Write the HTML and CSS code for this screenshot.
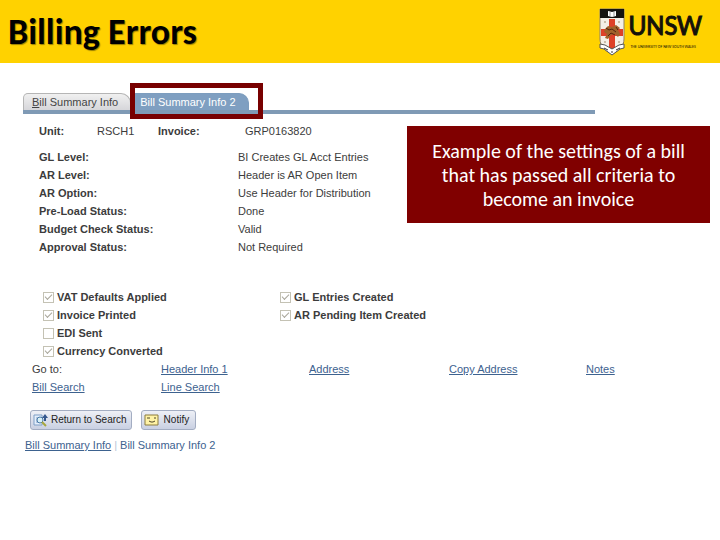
FILE: index.html
```
<!DOCTYPE html>
<html lang="en">
<head>
  <meta charset="UTF-8" />
  <meta name="viewport" content="width=device-width, initial-scale=1" />
  <title>Billing Errors</title>
  <link rel="stylesheet" href="styles.css">
</head>
<body>
  <header class="banner">
    <h1>Billing Errors</h1>
    <div class="logo" role="img" aria-label="UNSW - The University of New South Wales">
      <svg class="crest" width="26" height="48" viewBox="0 0 26 48" aria-hidden="true">
        <path d="M1 1h24v30c0 7-5 12-12 15C6 43 1 38 1 31z" fill="#f4efe6" stroke="#8d8068"/>
        <path d="M1 1h24v9H1z" fill="#15130f"/>
        <path d="M9 3l4 1 4-1v5l-4 1-4-1z" fill="#fff"/>
        <path d="M10 5h2M14 5h2M10 7h2M14 7h2" stroke="#999" stroke-width="1"/>
        <path d="M10 11h6v10h8v7h-8v13h-6V28H2v-7h8z" fill="#dd4128"/>
        <path d="M6 21l3-3 4 1 4-2 4 3-2 2 2 4-2 3-3-3-4 1-3 4-3-1 2-4-3-2z" fill="#a0622a"/>
        <path d="M7 20l3 2 3-1 4 3M9 28l3-3 4 2M17 19l2 3" fill="none" stroke="#54210f" stroke-width="1"/>
        <path d="M5 13l2 2M7 13l-2 2M19 13l2 2M21 13l-2 2M5 33l2 2M7 33l-2 2M19 33l2 2M21 33l-2 2" stroke="#c9bda8"/>
        <path d="M1 36l5 1 7 4 7-4 5-1v4l-4 1-8 6-8-6-4-1z" fill="#fff" stroke="#555"/>
        <path d="M5 40l4 2M12 44h2M17 42l4-2" stroke="#333"/>
      </svg>
      <div class="logo-text">
        <span class="logo-name">UNSW</span>
        <span class="logo-sub">THE UNIVERSITY OF NEW SOUTH WALES</span>
      </div>
    </div>
  </header>

  <main class="content">
    <nav class="tabs" aria-label="Bill pages">
      <a href="#info" class="tab"><u>B</u>ill Summary Info</a>
      <a href="#info2" class="tab active" aria-current="page">Bill Summary Info 2</a>
      <span class="highlight"></span>
    </nav>

    <aside class="callout">Example of the settings of a bill that has passed all criteria to become an invoice</aside>

    <dl class="bill-key">
      <dt>Unit:</dt><dd>RSCH1</dd>
      <dt>Invoice:</dt><dd>GRP0163820</dd>
    </dl>

    <dl class="status">
      <dt>GL Level:</dt><dd>BI Creates GL Acct Entries</dd>
      <dt>AR Level:</dt><dd>Header is AR Open Item</dd>
      <dt>AR Option:</dt><dd>Use Header for Distribution</dd>
      <dt>Pre-Load Status:</dt><dd>Done</dd>
      <dt>Budget Check Status:</dt><dd>Valid</dd>
      <dt>Approval Status:</dt><dd>Not Required</dd>
    </dl>

    <div class="checks">
      <div>
        <label><input type="checkbox" checked disabled>VAT Defaults Applied</label>
        <label><input type="checkbox" checked disabled>Invoice Printed</label>
        <label><input type="checkbox" disabled>EDI Sent</label>
        <label><input type="checkbox" checked disabled>Currency Converted</label>
      </div>
      <div>
        <label><input type="checkbox" checked disabled>GL Entries Created</label>
        <label><input type="checkbox" checked disabled>AR Pending Item Created</label>
      </div>
    </div>

    <nav class="goto" aria-label="Go to">
      <span>Go to:</span>
      <a href="#header">Header Info 1</a>
      <a href="#address">Address</a>
      <a href="#copy">Copy Address</a>
      <a href="#notes">Notes</a>
      <a href="#bills">Bill Search</a>
      <a href="#lines">Line Search</a>
    </nav>

    <div class="actions">
      <button type="button">
        <svg width="16" height="14" viewBox="0 0 16 14" aria-hidden="true">
          <path d="M1 2h8v10H1z" fill="#e4eefb" stroke="#7f9fc6"/>
          <path d="M3 5h3M3 7h2M3 9h2" stroke="#7f9fc6"/>
          <circle cx="7" cy="7" r="3" fill="#d9f0f5" stroke="#4a79a8"/>
          <path d="M9 9l4 4" stroke="#a7a63c" stroke-width="2"/>
          <path d="M9 5l3-4 3 4h-2v3h-2V5z" fill="#33578d"/>
        </svg>
        Return to Search
      </button>
      <button type="button" class="notify">
        <svg width="16" height="14" viewBox="0 0 16 14" aria-hidden="true">
          <path d="M1 2h13v10H1z" fill="#fff3a6" stroke="#8c7d3c"/>
          <path d="M3 5h3M10 5h2M5 8l2 1h2l2-1" fill="none" stroke="#4d4526"/>
        </svg>
        Notify
      </button>
    </div>

    <nav class="footer-links" aria-label="Page links">
      <a href="#info">Bill Summary Info</a><span class="sep">|</span><span>Bill Summary Info 2</span>
    </nav>
  </main>
</body>
</html>
```
FILE: styles.css
```
/* Base */
* {
  box-sizing: border-box;
  margin: 0;
  padding: 0;
}
body {
  background: #fff;
  color: #3c3c3c;
  font-family: "Liberation Sans", Arial, sans-serif;
  font-size: 11px;
  line-height: 18px;
}
a {
  color: #3d628f;
}

/* Yellow banner */
.banner {
  display: flex;
  justify-content: space-between;
  align-items: center;
  height: 63px;
  padding: 0 18px 0 8px;
  background: #ffd200;
}
h1 {
  font-family: Carlito, Calibri, Lato, sans-serif;
  font-size: 36px;
  line-height: 40px;
  color: #000;
  text-shadow: 1px 1px 1px rgba(0, 0, 0, 0.4);
}
.logo {
  display: flex;
  gap: 3px;
  color: #14110a;
}
.logo-text {
  display: flex;
  flex-direction: column;
}
.logo-name {
  font-family: Carlito, Calibri, Lato, sans-serif;
  font-size: 28px;
  line-height: 36px;
  -webkit-text-stroke: 1px #14110a;
}
.logo-sub {
  padding-left: 2px;
  font-family: Carlito, Calibri, Lato, sans-serif;
  font-size: 4px;
  line-height: 5px;
  white-space: nowrap;
}

/* Tabs */
.content {
  position: relative;
  padding: 30px 32px 0 23px;
}
.tabs {
  position: relative;
  display: flex;
  width: 86%;
  border-bottom: 4px solid #7f9ab5;
}
.tab {
  height: 17px;
  padding: 0 12px 0 8px;
  border: 1px solid #b5b5b5;
  border-bottom: 0;
  border-radius: 5px 10px 0 0;
  background: linear-gradient(#f0f0f0, #d6d6da);
  color: #444;
  font-size: 11px;
  line-height: 17px;
  text-decoration: none;
}
.tab.active {
  border-color: #7d9dbe;
  background: #7f9fc1;
  color: #fff;
}
.highlight {
  position: absolute;
  top: -10px;
  left: 107px;
  width: 133px;
  height: 36px;
  border: 5px solid #780000;
}
.callout {
  position: absolute;
  top: 63px;
  right: 10px;
  width: 303px;
  padding: 13px 20px 12px;
  background: #800000;
  color: #fff;
  font-family: Carlito, Calibri, Lato, sans-serif;
  font-size: 20px;
  line-height: 24px;
  text-align: center;
}

/* Field values */
dt {
  font-weight: bold;
}
.bill-key {
  display: grid;
  grid-template-columns: 58px 61px 87px 1fr;
  padding: 8px 0 0 16px;
}
.status {
  display: grid;
  grid-template-columns: 199px 1fr;
  padding: 8px 0 0 16px;
}
dd {
  padding-top: 1px;
  line-height: 17px;
}

/* Check boxes */
.checks {
  display: grid;
  grid-template-columns: 237px 1fr;
  padding: 32px 0 0 20px;
  font-weight: bold;
}
.checks label {
  display: flex;
  align-items: center;
  gap: 3px;
}
.checks input {
  appearance: none;
  display: grid;
  place-items: center;
  width: 11px;
  height: 11px;
  border: 1px solid #c4c2b4;
  background: #fff;
}
.checks input:checked::before {
  content: "";
  width: 6px;
  height: 3px;
  margin-bottom: 2px;
  border: solid #a9a79b;
  border-width: 0 0 1px 1px;
  transform: rotate(-45deg);
}

/* Links */
.goto {
  display: grid;
  grid-template-columns: 129fr 148fr 140fr 137fr 102fr;
  justify-items: start;
  padding-left: 9px;
}
.actions {
  display: flex;
  gap: 9px;
  padding: 14px 0 0 7px;
}
.actions button {
  display: flex;
  align-items: center;
  gap: 2px;
  height: 20px;
  padding: 0 4px 0 2px;
  border: 1px solid #a3adc2;
  border-radius: 3px;
  background: linear-gradient(#eef0f6, #c9d0e2);
  color: #222;
  font: 10px/18px "Liberation Sans", Arial, sans-serif;
}
.actions .notify {
  gap: 4px;
  padding-right: 6px;
}
.footer-links {
  padding: 6px 0 0 2px;
  color: #3d628f;
}
.sep {
  padding: 0 3px;
  color: #b9c6d6;
}
```
